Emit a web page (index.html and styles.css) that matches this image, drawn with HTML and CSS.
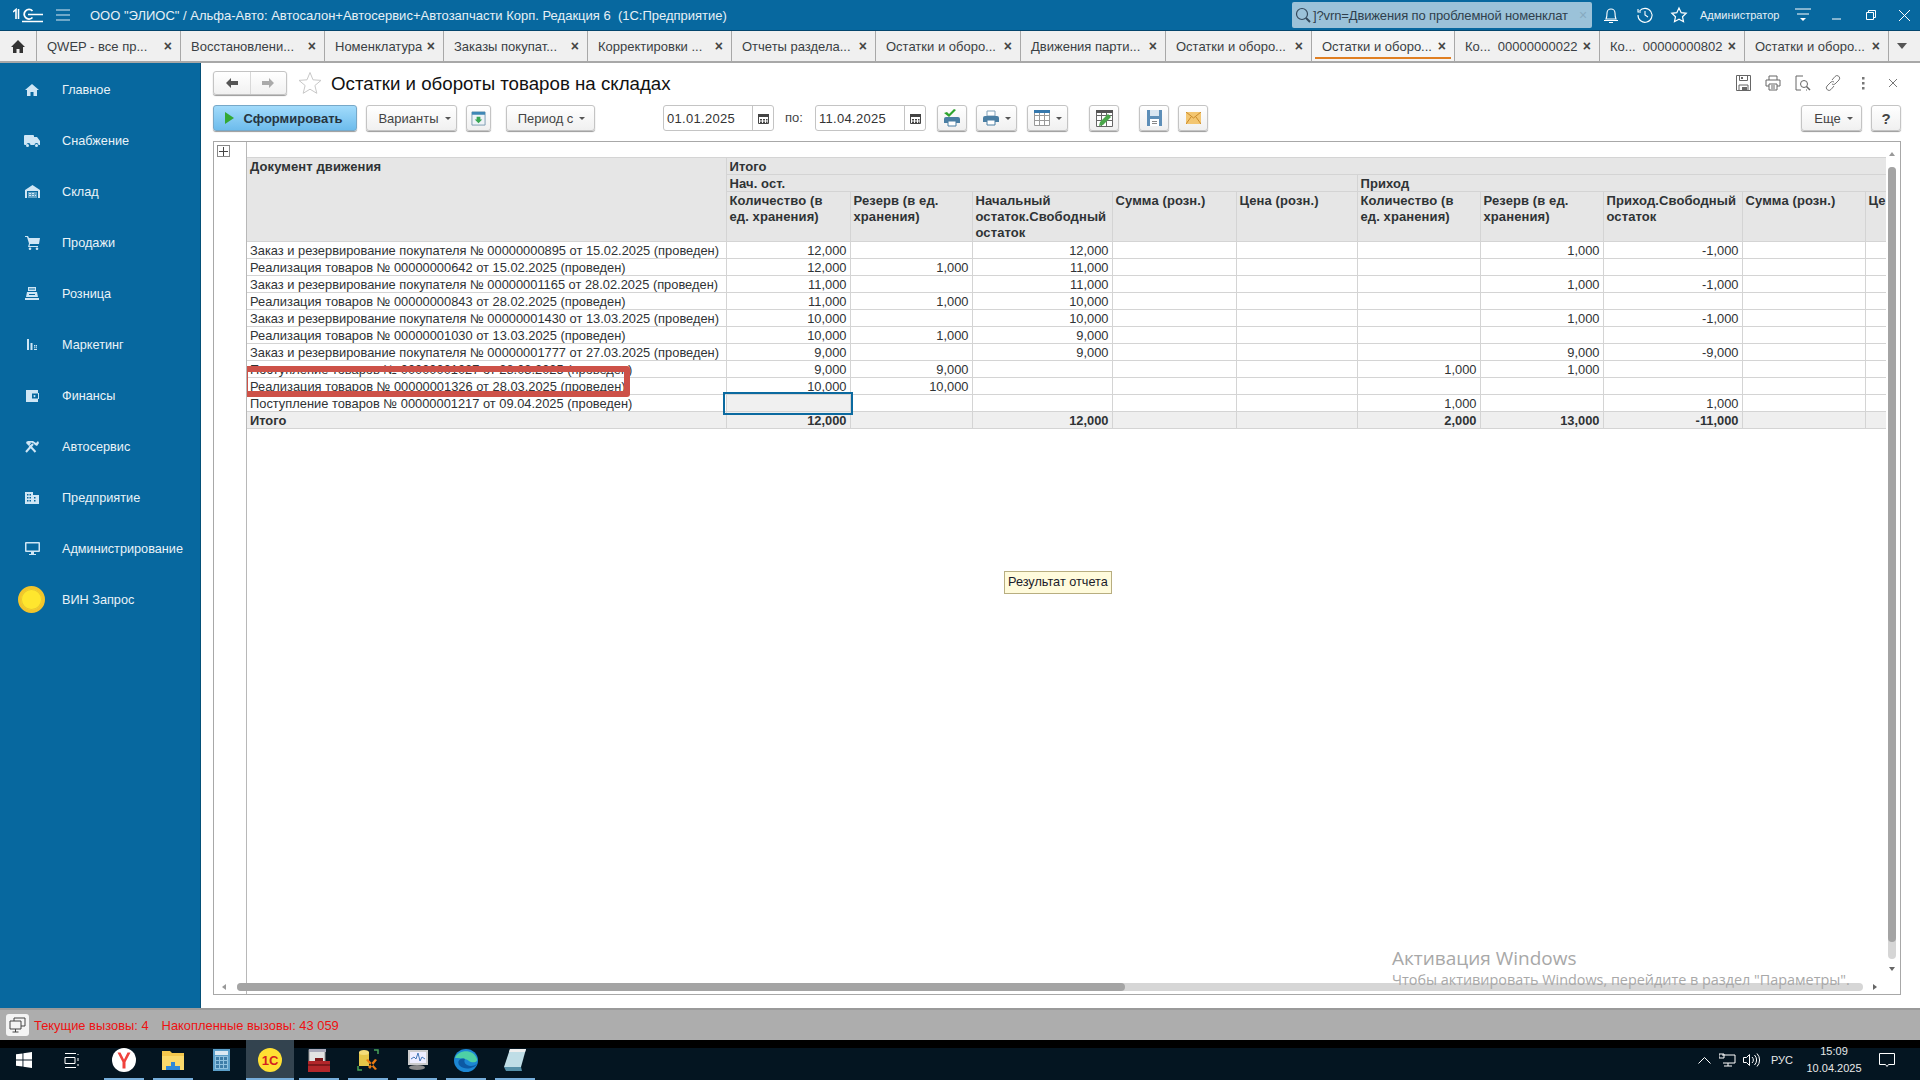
FILE: index.html
```html
<!DOCTYPE html>
<html lang="ru">
<head>
<meta charset="utf-8">
<title>Остатки и обороты товаров на складах</title>
<link rel="stylesheet" href="styles.css">
</head>
<body>
<div class="app">
  <header class="titlebar">
    <svg class="logo" width="30" height="15" viewBox="0 0 30 15"><path d="M0 4l3-2.500v9.500M5.500 1v10" fill="none" stroke="#fff" stroke-width="1.600"/><path d="M19.500 3a4.800 4.800 0 1 0 0 6.500" fill="none" stroke="#fff" stroke-width="1.800"/><path d="M15 6.500h15M9 13.500h21" stroke="#fff" stroke-width="1.600"/></svg>
    <svg class="burger" width="14" height="12" viewBox="0 0 14 12"><path d="M0 1h14M0 6h14M0 11h14" stroke="#d8e8f2" stroke-width="1"/></svg>
    <div class="apptitle">ООО "ЭЛИОС" / Альфа-Авто: Автосалон+Автосервис+Автозапчасти Корп. Редакция 6  (1С:Предприятие)</div>
    <div class="search">
      <svg width="16" height="16" viewBox="0 0 16 16"><circle cx="7" cy="7" r="5.500" fill="none" stroke="#34495c" stroke-width="1.200"/><path d="M11 11l4 4" stroke="#34495c" stroke-width="2"/></svg>
      <span class="searchtext">]?vrn=Движения по проблемной номенклат</span>
      <span class="searchx">×</span>
    </div>
    <div class="topicons">
      <svg width="18" height="18" viewBox="0 0 18 18"><path d="M4 13c1-2 1-3 1-6a4 4 0 0 1 8 0c0 3 0 4 1 6zM2 14.500h14M7 16.500h4" fill="none" stroke="#fff" stroke-width="1.100"/></svg>
      <svg class="ti2" width="18" height="18" viewBox="0 0 18 18"><path d="M3.500 5A7 7 0 1 1 2 9M2 3v3h3M9 5v4l3 2" fill="none" stroke="#fff" stroke-width="1.100"/></svg>
      <svg class="ti3" width="18" height="18" viewBox="0 0 18 18"><path d="M9 2l2.200 4.700 5 .6-3.700 3.400 1 5L9 13.200l-4.500 2.500 1-5L1.800 7.300l5-.6z" fill="none" stroke="#fff" stroke-width="1.200"/></svg>
      <span class="username">Администратор</span>
      <svg class="ti4" width="16" height="14" viewBox="0 0 16 14"><path d="M0 1h16M2 6h12" stroke="#fff"/><path d="M5 10h6l-3 3z" fill="#fff"/></svg>
      <svg class="ti5" width="10" height="10" viewBox="0 0 10 10"><path d="M0 9h9" stroke="#fff"/></svg>
      <svg class="ti6" width="10" height="10" viewBox="0 0 10 10"><path d="M.5 2.500h7v7h-7zM2.500 2.500v-2h7v7h-2" fill="none" stroke="#fff"/></svg>
      <svg class="ti7" width="11" height="11" viewBox="0 0 11 11"><path d="M0 0l11 11M11 0L0 11" stroke="#fff"/></svg>
    </div>
  </header>

  <nav class="tabs">
    <div class="tab tab-home"><svg width="14" height="13" viewBox="0 0 14 13"><path d="M7 0L0 7h2v6h3.500V9h3v4H12V7h2z" fill="#333"/></svg></div>
    <div class="tab w144"><span class="tabtext">QWEP - все пр...</span><b class="x">×</b></div>
    <div class="tab w144"><span class="tabtext">Восстановлени...</span><b class="x">×</b></div>
    <div class="tab w119"><span class="tabtext">Номенклатура</span><b class="x">×</b></div>
    <div class="tab w144"><span class="tabtext">Заказы покупат...</span><b class="x">×</b></div>
    <div class="tab w144"><span class="tabtext">Корректировки ...</span><b class="x">×</b></div>
    <div class="tab w144"><span class="tabtext">Отчеты раздела...</span><b class="x">×</b></div>
    <div class="tab w145"><span class="tabtext">Остатки и оборо...</span><b class="x">×</b></div>
    <div class="tab w145"><span class="tabtext">Движения парти...</span><b class="x">×</b></div>
    <div class="tab w146"><span class="tabtext">Остатки и оборо...</span><b class="x">×</b></div>
    <div class="tab w143 active"><span class="tabtext">Остатки и оборо...</span><b class="x">×</b></div>
    <div class="tab w145"><span class="tabtext">Ко...  00000000022</span><b class="x">×</b></div>
    <div class="tab w145"><span class="tabtext">Ко...  00000000802</span><b class="x">×</b></div>
    <div class="tab w144"><span class="tabtext">Остатки и оборо...</span><b class="x">×</b></div>
    <div class="tab-more"><i class="caret big"></i></div>
  </nav>

  <div class="main">
    <aside class="sidebar">
      <a class="navitem"><span class="navicon"><svg width="14" height="12" viewBox="0 0 14 12"><path d="M7 0L0 6h2v6h3.500V8h3v4H12V6h2z"/></svg></span>Главное</a>
      <a class="navitem"><span class="navicon"><svg width="16" height="12" viewBox="0 0 16 12"><path d="M0 1q0-1 1-1h8q1 0 1 1v1h3l3 4v4h-1.500a2 2 0 0 0-4 0h-4a2 2 0 0 0-4 0H1q-1 0-1-1z"/><circle cx="3.500" cy="10.500" r="1.500"/><circle cx="12.500" cy="10.500" r="1.500"/></svg></span>Снабжение</a>
      <a class="navitem"><span class="navicon"><svg width="15" height="13" viewBox="0 0 15 13"><path d="M0 13V5l7.500-5L15 5v8h-2V6H2v7z"/><path d="M3 7h9v6H3z" opacity=".45"/><path d="M4 8h2v1H4zM7 8h2v1H7zM4 10h2v1H4zM7 10h2v1H7zM10 10h1v1h-1z"/></svg></span>Склад</a>
      <a class="navitem"><span class="navicon"><svg width="15" height="14" viewBox="0 0 15 14"><path d="M0 0h3l1 2h11l-1 6H5l-.500 2H13v1H3l1-3.500L2 1H0z"/><circle cx="5" cy="12.700" r="1.300"/><circle cx="12" cy="12.700" r="1.300"/></svg></span>Продажи</a>
      <a class="navitem"><span class="navicon"><svg width="14" height="13" viewBox="0 0 14 13"><path d="M3 0h8v4H3zM2 5h10l1 5H1zM0 11h14v2H0z"/><path d="M4 1.500h6v1H4zM4 7h6v1H4z" fill="#07689f"/></svg></span>Розница</a>
      <a class="navitem"><span class="navicon"><svg width="10" height="11" viewBox="0 0 10 11"><path d="M0 0h2v11H0zM3.500 4h2v7h-2zM7 6h1.200v1.500H7zM8.800 6H10v1.500H8.800zM7 8.300h1.200v1H7zM8.800 8.300H10v1H8.800zM7 10h3v1H7z"/></svg></span>Маркетинг</a>
      <a class="navitem"><span class="navicon"><svg width="13" height="12" viewBox="0 0 13 12"><path fill-rule="evenodd" d="M0 0h12v3h1v6h-1v3H0zM6 3.500h6v5H6zM8.500 5a1 1 0 1 0 .01 0z"/></svg></span>Финансы</a>
      <a class="navitem"><span class="navicon"><svg width="14" height="13" viewBox="0 0 14 13"><path d="M1 12L8 4M10.500 12L4.500 5.500" fill="none" stroke="#cfe6f5" stroke-width="2"/><path d="M3 1h5l3 2 2-2 1 2-2 3-2-1-2-2-5-1zM1 3l1-2 4 2-2 3z"/></svg></span>Автосервис</a>
      <a class="navitem"><span class="navicon"><svg width="14" height="12" viewBox="0 0 14 12"><path fill-rule="evenodd" d="M0 0h8v3h6v9H0zM2 2v1.500h1.500V2zM4.500 2v1.500H6V2zM2 5v1.500h1.500V5zM4.500 5v1.500H6V5zM2 8v1.500h1.500V8zM4.500 8v1.500H6V8zM9 5v1.500h1.500V5zM9 8v1.500h1.500V8z"/></svg></span>Предприятие</a>
      <a class="navitem"><span class="navicon"><svg width="15" height="13" viewBox="0 0 15 13"><path fill-rule="evenodd" d="M1 0h13q1 0 1 1v8q0 1-1 1H9v2h2v1H4v-1h2v-2H1q-1 0-1-1V1q0-1 1-1zM1.500 1.500v7h12v-7z"/></svg></span>Администрирование</a>
      <a class="navitem"><span class="navicon"><span class="coin"></span></span>ВИН Запрос</a>
    </aside>

    <section class="content">
      <div class="formhead">
        <div class="navbtns">
          <span class="navbtn"><svg width="12" height="10" viewBox="0 0 12 10"><path d="M5 0v3h7v4H5v3L0 5z" fill="#555"/></svg></span>
          <span class="navbtn off"><svg width="12" height="10" viewBox="0 0 12 10"><path d="M7 0v3H0v4h7v3l5-5z" fill="#aaa"/></svg></span>
        </div>
        <svg class="favstar" width="24" height="24" viewBox="0 0 24 24"><path d="M12 1.500l3 7.300 8 .6-6.100 5.100 1.900 7.800L12 18.200l-6.800 4.100 1.900-7.800L1 9.400l8-.6z" fill="#fff" stroke="#c8c8c8"/></svg>
        <h1 class="formtitle">Остатки и обороты товаров на складах</h1>
        <div class="formtools">
          <svg width="15" height="16" viewBox="0 0 15 16"><path d="M.5.500h14v15H.5zM3.500.500v5h8v-5M3 10h9v5.500H3z" fill="none" stroke="#666"/><path d="M5 2h2v2H5zM6 12h5v3H6z" fill="#666"/></svg>
          <svg width="16" height="16" viewBox="0 0 16 16"><path d="M4 5V1h8v4M4 11H1V5h14v6h-3M4 9h8v6H4zM6 11h4M6 13h4" fill="none" stroke="#666"/></svg>
          <svg width="16" height="16" viewBox="0 0 16 16"><path d="M6 15H1V1h7M11 15h1" fill="none" stroke="#666"/><circle cx="9" cy="9" r="3.500" fill="none" stroke="#666"/><path d="M11.500 11.500L15 15" stroke="#666" stroke-width="1.500"/></svg>
          <svg width="16" height="16" viewBox="0 0 16 16"><path d="M7 5l3-3.500a2.500 2.500 0 0 1 4 3.500l-4 4a2.500 2.500 0 0 1-3 0M9 11l-3 3.500a2.500 2.500 0 0 1-4-3.500l4-4a2.500 2.500 0 0 1 3 0" fill="none" stroke="#777"/></svg>
          <svg width="16" height="16" viewBox="0 0 16 16"><path d="M7 2h2.500v2.500H7zM7 7h2.500v2.500H7zM7 12h2.500v2.500H7z" fill="#777"/></svg>
          <svg width="16" height="16" viewBox="0 0 16 16"><path d="M4 4l8 8M12 4l-8 8" stroke="#777"/></svg>
        </div>
      </div>

      <div class="cmdbar">
        <button class="btn primary w144b"><i class="play"></i>Сформировать</button>
        <button class="btn w90">Варианты<i class="caret"></i></button>
        <button class="btn ic w24"><svg width="15" height="15" viewBox="0 0 16 16"><path d="M1 1h14v14H1z" fill="#eef3f7" stroke="#7a9ab0"/><path d="M1 1h14v3H1z" fill="#3f87b5"/><path d="M6 6h4v3h2l-4 4-4-4h2z" fill="#3aa655"/></svg></button>
        <button class="btn w89">Период с<i class="caret"></i></button>
        <div class="datefield d1"><span class="dateval">01.01.2025</span><span class="datecal"><svg width="11" height="11" viewBox="0 0 11 11"><path d="M.5 1.500h10v9H.5z" fill="#fff" stroke="#444"/><path d="M0 1h11v3H0zM2 6h2v1.500H2zM5 6h2v1.500H5zM8 6h1.500v1.500H8zM2 8.500h2V10H2zM5 8.500h2V10H5zM8 8.500h1.500V10H8z" fill="#444"/></svg></span></div>
        <span class="datelabel">по:</span>
        <div class="datefield d2"><span class="dateval">11.04.2025</span><span class="datecal"><svg width="11" height="11" viewBox="0 0 11 11"><path d="M.5 1.500h10v9H.5z" fill="#fff" stroke="#444"/><path d="M0 1h11v3H0zM2 6h2v1.500H2zM5 6h2v1.500H5zM8 6h1.500v1.500H8zM2 8.500h2V10H2zM5 8.500h2V10H5zM8 8.500h1.500V10H8z" fill="#444"/></svg></span></div>
        <button class="btn ic w30 g1"><svg width="18" height="18" viewBox="0 0 18 18"><path d="M3 8h12q2 0 2 2v4H1v-4q0-2 2-2z" fill="#4a7ea3"/><path d="M5 12h8v5H5z" fill="#fff" stroke="#4a7ea3"/><path d="M1 4l3-1 2 2 5-5 2 1-7 7z" fill="#2fa52f"/></svg></button>
        <button class="btn ic w41 g2"><svg width="16" height="16" viewBox="0 0 16 16"><path d="M4 1h8v5H4z" fill="#fff" stroke="#7f9fb7"/><path d="M2 6h12q2 0 2 2v4H0V8q0-2 2-2z" fill="#4a7ea3"/><path d="M4 10h8v5H4z" fill="#fff" stroke="#4a7ea3"/></svg><i class="caret"></i></button>
        <button class="btn ic w41 g3"><svg width="16" height="16" viewBox="0 0 16 16"><path d="M.5.500h15v15H.5zM.5 5.500h15M.5 10.500h15M5.500 3v12.500M10.500 3v12.500" fill="#fff" stroke="#999"/><path d="M0 0h16v3H0z" fill="#3678ad"/></svg><i class="caret"></i></button>
        <button class="btn ic w30 g4"><svg width="17" height="17" viewBox="0 0 17 17"><path d="M.5.500h16v16H.5zM.5 5.500h16M.5 10.500h16M5.500.5v16M10.500.5v16" fill="#fff" stroke="#666"/><path d="M0 0h17v3H0z" fill="#555"/><path d="M3 16l1-4 8-8 3 3-8 8z" fill="#4aa64a"/></svg></button>
        <button class="btn ic w30 g5"><svg width="15" height="16" viewBox="0 0 15 16"><path d="M0 0h15v16H0z" fill="#5e8fb8"/><path d="M3 0h9v6H3z" fill="#d9e6f1"/><path d="M3 9h9v7H3z" fill="#fff"/><path d="M5 11h5v1H5zM5 13h5v1H5z" fill="#888"/></svg></button>
        <button class="btn ic w30 g6"><svg width="15" height="12" viewBox="0 0 15 12"><path d="M0 0h15v12H0z" fill="#f3c671"/><path d="M0 0l7.500 6L15 0M0 12l5-7M15 12l-5-7" fill="none" stroke="#c98a2b"/></svg></button>
        <button class="btn w61 more">Еще<i class="caret"></i></button>
        <button class="btn ic w30 help">?</button>
      </div>

      <div class="frame">
        <div class="gutter"><span class="plus"><svg width="9" height="9" viewBox="0 0 9 9"><path d="M4.500 0v9M0 4.500h9" stroke="#444"/></svg></span></div>
        <div class="report">
          <table class="grid">
            <colgroup>
              <col class="c0"><col class="c1"><col class="c2"><col class="c3"><col class="c4"><col class="c5"><col class="c6"><col class="c7"><col class="c8"><col class="c9"><col class="c10">
            </colgroup>
            <thead>
              <tr class="h17"><th rowspan="3">Документ движения</th><th colspan="10">Итого</th></tr>
              <tr class="h17"><th colspan="5">Нач. ост.</th><th colspan="5">Приход</th></tr>
              <tr class="h50"><th>Количество (в<br>ед. хранения)</th><th>Резерв (в ед.<br>хранения)</th><th>Начальный остаток.Свободный остаток</th><th>Сумма (розн.)</th><th>Цена (розн.)</th><th>Количество (в<br>ед. хранения)</th><th>Резерв (в ед.<br>хранения)</th><th>Приход.Свободный остаток</th><th>Сумма (розн.)</th><th class="clip">Це</th></tr>
            </thead>
            <tbody>
              <tr><td>Заказ и резервирование покупателя № 00000000895 от 15.02.2025 (проведен)</td><td class="n">12,000</td><td></td><td class="n">12,000</td><td></td><td></td><td></td><td class="n">1,000</td><td class="n">-1,000</td><td></td><td></td></tr>
              <tr><td>Реализация товаров № 00000000642 от 15.02.2025 (проведен)</td><td class="n">12,000</td><td class="n">1,000</td><td class="n">11,000</td><td></td><td></td><td></td><td></td><td></td><td></td><td></td></tr>
              <tr><td>Заказ и резервирование покупателя № 00000001165 от 28.02.2025 (проведен)</td><td class="n">11,000</td><td></td><td class="n">11,000</td><td></td><td></td><td></td><td class="n">1,000</td><td class="n">-1,000</td><td></td><td></td></tr>
              <tr><td>Реализация товаров № 00000000843 от 28.02.2025 (проведен)</td><td class="n">11,000</td><td class="n">1,000</td><td class="n">10,000</td><td></td><td></td><td></td><td></td><td></td><td></td><td></td></tr>
              <tr><td>Заказ и резервирование покупателя № 00000001430 от 13.03.2025 (проведен)</td><td class="n">10,000</td><td></td><td class="n">10,000</td><td></td><td></td><td></td><td class="n">1,000</td><td class="n">-1,000</td><td></td><td></td></tr>
              <tr><td>Реализация товаров № 00000001030 от 13.03.2025 (проведен)</td><td class="n">10,000</td><td class="n">1,000</td><td class="n">9,000</td><td></td><td></td><td></td><td></td><td></td><td></td><td></td></tr>
              <tr><td>Заказ и резервирование покупателя № 00000001777 от 27.03.2025 (проведен)</td><td class="n">9,000</td><td></td><td class="n">9,000</td><td></td><td></td><td></td><td class="n">9,000</td><td class="n">-9,000</td><td></td><td></td></tr>
              <tr><td>Поступление товаров № 00000001027 от 28.03.2025 (проведен)</td><td class="n">9,000</td><td class="n">9,000</td><td></td><td></td><td></td><td class="n">1,000</td><td class="n">1,000</td><td></td><td></td><td></td></tr>
              <tr><td>Реализация товаров № 00000001326 от 28.03.2025 (проведен)</td><td class="n">10,000</td><td class="n">10,000</td><td></td><td></td><td></td><td></td><td></td><td></td><td></td><td></td></tr>
              <tr><td>Поступление товаров № 00000001217 от 09.04.2025 (проведен)</td><td class="sel"></td><td></td><td></td><td></td><td></td><td class="n">1,000</td><td></td><td class="n">1,000</td><td></td><td></td></tr>
            </tbody>
            <tfoot>
              <tr><td>Итого</td><td class="n">12,000</td><td></td><td class="n">12,000</td><td></td><td></td><td class="n">2,000</td><td class="n">13,000</td><td class="n">-11,000</td><td></td><td></td></tr>
            </tfoot>
          </table>
          <div class="selbox"></div>
          <div class="redmark"></div>
        </div>
        <div class="vscroll"><i class="arrow up"></i><span class="vtrack"><span class="vthumb"></span></span><i class="arrow down"></i></div>
        <div class="hscroll"><i class="arrow left"></i><span class="htrack"><span class="hthumb"></span></span><i class="arrow right"></i></div>
        <div class="tooltip">Результат отчета</div>
        <div class="watermark"><div class="wm1">Активация Windows</div><div class="wm2">Чтобы активировать Windows, перейдите в раздел "Параметры".</div></div>
      </div>
    </section>
  </div>

  <footer class="statusbar">
    <span class="statusbtn"><svg width="17" height="16" viewBox="0 0 17 16"><path d="M5 4V1h11v8h-4M1 4h11v8H1zM6.500 12v3M3.500 15h6" fill="none" stroke="#444"/></svg></span>
    <span class="calls">Текущие вызовы: 4</span>
    <span class="calls">Накопленные вызовы: 43 059</span>
  </footer>

  <div class="taskbar">
    <span class="tb-app w48"><svg width="16" height="16" viewBox="0 0 16 16"><path d="M0 2.300L6.500 1.400v6.200H0zM7.400 1.300L16 0v7.600H7.400zM0 8.400h6.500v6.200L0 13.700zM7.400 8.400H16V16l-8.600-1.200z" fill="#fff"/></svg></span>
    <span class="tb-app w48"><svg width="16" height="15" viewBox="0 0 16 15"><path d="M1 .5h11M1 14.500h11M1 4.500h10v6H1zM14 1v1M14 5v3M14 11v2" fill="none" stroke="#fff"/></svg></span>
    <span class="tb-app w49 run first"><svg width="24" height="24" viewBox="0 0 24 24"><circle cx="12" cy="12" r="12" fill="#fff"/><path d="M5.500 4.500l5 9.500v6.500h3V14l5-9.500h-3l-3.500 7-3.500-7z" fill="#f0423c"/></svg></span>
    <span class="tb-app w49 run"><svg width="22" height="19" viewBox="0 0 22 19"><path d="M0 0h8l2 2h12v17H0z" fill="#f4c74d"/><path d="M0 5h22v14H0z" fill="#fbd96b"/><path d="M4 15h5v-4h4v4h5v4H4z" fill="#2f88d8"/></svg></span>
    <span class="tb-app w49"><svg width="17" height="22" viewBox="0 0 17 22"><path d="M0 0h17v22H0z" fill="#5b9fc9"/><path d="M2 2h13v4H2z" fill="#dbe9f3"/><path d="M2 7h13v13H2z" fill="#8fc1df"/><path d="M3 8h3v3H3zM7 8h3v3H7zM11 8h3v3h-3zM3 12h3v3H3zM7 12h3v3H7zM11 12h3v3h-3zM3 16h3v3H3zM7 16h3v3H7zM11 16h3v3h-3z" fill="#3d7da8"/></svg></span>
    <span class="tb-app w48 current"><span class="onec">1С</span></span>
    <span class="tb-app w49 run"><svg width="22" height="23" viewBox="0 0 22 23"><path d="M1 .5h16v13H1z" fill="#e3e3e3" stroke="#999"/><path d="M1 0h17v3H1z" fill="#aab"/><path d="M0 12h22v11H0z" fill="#b2262a"/><path d="M7 9h8v3H7zM0 15h22v2H0z" fill="#7d181b"/></svg></span>
    <span class="tb-app w49 run"><svg width="22" height="22" viewBox="0 0 22 22"><path d="M2 3h10v14H2z" fill="#e6c649"/><ellipse cx="7" cy="3.500" rx="5" ry="2.500" fill="#f4dc79"/><path d="M11 18l7-8 2 1-7 9zM9 11l9 10 2-1-9-10z" fill="#ea7b12"/><path d="M17 1h4v4M1 17v4h4" fill="none" stroke="#48a25a" stroke-width="1.500"/></svg></span>
    <span class="tb-app w49 run"><svg width="23" height="20" viewBox="0 0 23 20"><path d="M3 0h20v15H3z" fill="#ccc"/><path d="M5 2h16v11H5z" fill="#eef"/><path d="M6 9l3-2 2 2 2-6 2 8 2-4 3 2" fill="none" stroke="#4478b8"/><ellipse cx="12" cy="17.500" rx="8" ry="2.500" fill="#8a8a8a"/></svg></span>
    <span class="tb-app w49 run"><svg width="24" height="23" viewBox="0 0 24 23"><ellipse cx="12" cy="11.500" rx="12" ry="11.500" fill="#1c87d4"/><path d="M1 9c3-8 18-10 22 1 1 4-6 4-8 2-3-3-11-3-14-3z" fill="#4ed0a5"/><path d="M6 17c-4-4 0-9 5-7-2 3 1 7 6 7 2 0 4-1 6-2-3 5-13 6-17 2z" fill="#0c59a4"/></svg></span>
    <span class="tb-app w49 run"><svg width="22" height="22" viewBox="0 0 22 22"><path d="M6 0h16l-5 18H0z" fill="#bfdde6"/><path d="M6 0h16l-1 3H5z" fill="#eee"/><path d="M0 18h17l1 4H2z" fill="#558fa7"/></svg></span>
    <span class="tray">
      <svg width="13" height="8" viewBox="0 0 13 8"><path d="M.5 7.500l6-6 6 6" fill="none" stroke="#fff"/></svg>
      <svg class="tr2" width="17" height="14" viewBox="0 0 17 14"><path d="M3 2h13v8H4M9 10v3M5 13h8M0 1h5v4H0z" fill="none" stroke="#fff"/></svg>
      <svg class="tr3" width="17" height="14" viewBox="0 0 17 14"><path d="M.5 4.500h3l3-3v11l-3-3h-3zM9 4a4 4 0 0 1 0 6M11.500 2a7 7 0 0 1 0 10M14 .5a9.500 9.500 0 0 1 0 13" fill="none" stroke="#fff"/></svg>
      <span class="lang">РУС</span>
      <span class="clock"><span>15:09</span><span>10.04.2025</span></span>
      <svg class="tr4" width="16" height="15" viewBox="0 0 16 15"><path d="M.5.500h15v11H9.500l-1.500 2-1.500-2h-6z" fill="none" stroke="#fff"/></svg>
    </span>
  </div>
</div>
</body>
</html>
```

FILE: styles.css
```css
* { box-sizing: border-box; }
html, body { margin: 0; height: 100%; }
body { font-family: "Liberation Sans", Arial, sans-serif; font-size: 13px; color: #333; overflow: hidden; }
.app { width: 1920px; height: 1080px; display: flex; flex-direction: column; overflow: hidden; }

.titlebar { height: 31px; flex: none; background: #07689f; border-bottom: 1px solid #04466d; display: flex; align-items: center; color: #fff; }
.logo { margin-left: 13px; flex: none; }
.burger { margin-left: 13px; flex: none; }
.apptitle { margin-left: 20px; width: 1202px; font-size: 13px; color: #e6f0f6; white-space: pre; flex: none; }
.search { width: 300px; height: 26px; background: #9bc2d9; border-radius: 2px; display: flex; align-items: center; padding-left: 3px; color: #2f3f4c; font-size: 13px; flex: none; }
.searchtext { margin-left: 2px; white-space: nowrap; letter-spacing: -.13px; }
.searchx { margin-left: 11px; color: #87aac0; font-size: 14px; }
.topicons { display: flex; align-items: center; margin-left: 10px; }
.ti2 { margin-left: 16px; }
.ti3 { margin-left: 16px; }
.username { margin-left: 12px; font-size: 11px; color: #e6f0f6; width: 89px; white-space: nowrap; }
.ti4 { margin-left: 6px; }
.ti5 { margin-left: 21px; }
.ti6 { margin-left: 24px; }
.ti7 { margin-left: 23px; }

.tabs { height: 32px; flex: none; background: #f0f0f0; border-bottom: 2px solid #a8a8a8; display: flex; }
.tab { height: 30px; flex: none; display: flex; align-items: center; justify-content: space-between; padding: 0 8px 0 10px; border-right: 1px solid #a8a8a8; color: #3a3f44; font-size: 13px; position: relative; }
.tab-home { width: 37px; justify-content: center; padding: 0; }
.w144 { width: 144px; }
.w119 { width: 119px; }
.w145 { width: 145px; }
.w146 { width: 146px; }
.w143 { width: 143px; }
.tabtext { white-space: pre; }
.x { font-size: 14px; font-weight: bold; color: #444; line-height: 1; }
.active { background: #f5f5f5; }
.active::after { content: ""; position: absolute; left: 3px; right: 3px; bottom: 2px; height: 2px; background: #e07f22; }
.tab-more { flex: 1; display: flex; align-items: center; justify-content: center; padding-right: 6px; }

.caret { display: inline-block; width: 0; height: 0; border-left: 3px solid transparent; border-right: 3px solid transparent; border-top: 3px solid #555; margin-left: 6px; }
.caret.big { border-left-width: 5px; border-right-width: 5px; border-top-width: 6px; margin-left: 0; }

.main { flex: 1; display: flex; min-height: 0; }
.sidebar { width: 201px; flex: none; background: #07689f; border-right: 1px solid #055078; padding-top: 1px; }
.navitem { height: 51px; display: flex; align-items: center; color: #eaf3f8; font-size: 12.700px; }
.navicon { width: 62px; padding-left: 2px; display: flex; justify-content: center; flex: none; }
.navicon svg { fill: #cfe6f5; }
.coin { width: 27px; height: 27px; border-radius: 50%; background: #ffe62e; border: 3px solid #f2c52b; box-shadow: inset 0 0 0 1px #e8c830; margin-left: -2px; }

.content { flex: 1; min-width: 0; padding: 8px 19px 13px 12px; display: flex; flex-direction: column; background: #fff; }
.formhead { height: 24px; display: flex; align-items: center; flex: none; }
.navbtns { width: 74px; height: 24px; display: flex; border: 1px solid #c4c4c4; border-radius: 3px; box-shadow: 0 1px 1px #999; background: linear-gradient(#fff, #f1f1f1); }
.navbtn { flex: 1; display: flex; align-items: center; justify-content: center; }
.navbtn + .navbtn { border-left: 1px solid #d8d8d8; }
.favstar { margin-left: 11px; }
.formtitle { margin: 1px 0 0 9px; font-size: 18.700px; font-weight: normal; color: #111; white-space: nowrap; }
.formtools { margin-left: auto; display: flex; gap: 14px; }

.cmdbar { height: 26px; margin-top: 10px; display: flex; align-items: stretch; flex: none; }
.btn { font: inherit; font-size: 13px; color: #444; border: 1px solid #c4c4c4; border-radius: 3px; background: linear-gradient(#fff, #f0f0f0); box-shadow: 0 1px 1px #999; display: flex; align-items: center; justify-content: center; padding: 0; flex: none; }
.primary { background: linear-gradient(#a2dbfb, #6dbcec); border-color: #77a8c8; color: #26343f; font-weight: bold; }
.play { width: 0; height: 0; border-left: 9px solid #34a834; border-top: 6px solid transparent; border-bottom: 6px solid transparent; margin-right: 9px; margin-left: -2px; }
.w144b { width: 144px; }
.w90 { width: 91px; margin-left: 9px; padding-left: 6px; }
.w24 { width: 25px; margin-left: 9px; }
.w89 { width: 89px; margin-left: 15px; padding-left: 2px; }
.w30 { width: 30px; }
.w41 { width: 41px; }
.w61 { width: 61px; padding-left: 4px; }
.datefield { height: 26px; border: 1px solid #c4c4c4; border-radius: 3px; display: flex; width: 111px; flex: none; }
.d1 { margin-left: 68px; }
.d2 { margin-left: 0; }
.dateval { flex: 1; padding-left: 3px; line-height: 25px; color: #333; letter-spacing: .3px; }
.datecal { width: 21px; border-left: 1px solid #c4c4c4; display: flex; align-items: center; justify-content: center; }
.datelabel { width: 41px; padding-left: 11px; line-height: 26px; color: #444; }
.g1 { margin-left: 11px; }
.g2 { margin-left: 9px; }
.g3 { margin-left: 10px; }
.g4 { margin-left: 21px; }
.g5 { margin-left: 20px; }
.g6 { margin-left: 9px; }
.more { margin-left: auto; }
.help { margin-left: 9px; font-size: 15px; font-weight: bold; }

.frame { flex: 1; margin-top: 10px; border: 1px solid #a8a8a8; display: flex; min-height: 0; position: relative; }
.gutter { width: 33px; flex: none; padding: 3px 0 0 3px; border-right: 1px solid #b8b8b8; }
.plus { width: 13px; height: 12px; border: 1px solid #888; display: flex; align-items: center; justify-content: center; background: #fff; }
.report { width: 1639px; height: 100%; padding-top: 15px; overflow: hidden; position: relative; flex: none; }

.grid { table-layout: fixed; width: 1639px; border-collapse: collapse; font-size: 12.870px; line-height: 15px; color: #2f3335; }
.c0 { width: 479px; } .c1 { width: 124px; } .c2 { width: 122px; } .c3 { width: 140px; } .c4 { width: 124px; } .c5 { width: 121px; } .c6 { width: 123px; } .c7 { width: 123px; } .c8 { width: 139px; } .c9 { width: 123px; } .c10 { width: 21px; }
.grid th { background: #e6e6e6; border: 1px solid #d4d4d4; text-align: left; vertical-align: top; padding: 1px 3px 0; font-size: 13px; font-weight: bold; letter-spacing: .1px; overflow: hidden; }
.grid th:first-child { border-left: 0; }
.h17 { height: 17px; }
.h50 { height: 50px; }
.h50 th { line-height: 16px; }
.clip { white-space: nowrap; }
.grid td { height: 17px; padding: 0 3px; border: 1px solid #d4d4d4; white-space: nowrap; overflow: hidden; background: #fff; }
.grid td:first-child { border-left: 0; }
.n { text-align: right; }
.grid tfoot td { background: #efefef; font-weight: bold; }
.grid td.sel { background: #f0f0f0; }
.selbox { position: absolute; left: 476px; top: 250px; width: 130px; height: 23px; border: 2px solid #0b6aa0; pointer-events: none; }
.redmark { position: absolute; left: -5px; top: 224px; width: 388px; height: 31px; border: 6px solid #cd5148; border-radius: 3px; pointer-events: none; }

.vscroll { position: absolute; right: 3px; top: 10px; bottom: 23px; width: 10px; display: flex; flex-direction: column; align-items: center; }
.vtrack { flex: 1; width: 8px; margin: 11px 0 8px; background: #d6d6d6; border-radius: 4px; display: block; }
.vthumb { display: block; height: 775px; background: #a4a4a4; border-radius: 4px; }
.hscroll { position: absolute; left: 8px; right: 23px; bottom: 2px; height: 10px; display: flex; align-items: center; }
.htrack { flex: 1; height: 8px; margin: 0 10px 0 11px; background: #d6d6d6; border-radius: 4px; display: block; }
.hthumb { display: block; width: 888px; height: 8px; background: #a4a4a4; border-radius: 4px; }
.arrow { width: 0; height: 0; flex: none; border: 3px solid transparent; }
.arrow.up { border-bottom: 4px solid #999; border-top: 0; }
.arrow.down { border-top: 4px solid #666; border-bottom: 0; }
.arrow.left { border-right: 4px solid #999; border-left: 0; }
.arrow.right { border-left: 4px solid #666; border-right: 0; }

.tooltip { position: absolute; left: 790px; top: 429px; width: 108px; height: 23px; background: #fffbdc; border: 1px solid #b8ae80; font-size: 12.700px; line-height: 21px; padding-left: 3px; color: #1a1a2a; white-space: nowrap; }
.watermark { position: absolute; left: 1178px; top: 804px; color: #a8a8a8; font-family: "Open Sans", sans-serif; white-space: nowrap; pointer-events: none; }
.wm1 { font-size: 19px; line-height: 24px; }
.wm2 { font-size: 14.400px; line-height: 20px; }

.statusbar { height: 32px; flex: none; background: #adadad; border-top: 2px solid #9a9a9a; display: flex; align-items: center; padding-left: 6px; color: #ee1111; font-size: 12.900px; }
.statusbtn { width: 23px; height: 22px; background: #f4f4f4; border-radius: 3px; display: flex; align-items: center; justify-content: center; margin-right: 5px; }
.calls { margin-right: 13px; }

.taskbar { height: 40px; flex: none; background: linear-gradient(#000 0, #000 8px, #041521 8px); display: flex; align-items: stretch; color: #fff; }
.tb-app { display: flex; align-items: center; justify-content: center; flex: none; }
.first { margin-left: 3px; }
.w48 { width: 48px; }
.w49 { width: 49px; }
.run { background: linear-gradient(#77aedb, #77aedb) bottom center / 40px 2px no-repeat; }
.current { background: #33434f linear-gradient(#77aedb, #77aedb) bottom center / 48px 2px no-repeat; }
.onec { width: 24px; height: 24px; border-radius: 50%; background: #ffe033; color: #d32020; font-weight: bold; font-size: 13px; display: flex; align-items: center; justify-content: center; }
.tray { margin-left: auto; display: flex; align-items: center; font-size: 11px; color: #e8e8e8; padding-right: 25px; }
.tr2 { margin-left: 8px; }
.tr3 { margin-left: 7px; }
.lang { margin-left: 11px; }
.clock { margin-left: 9px; width: 64px; display: flex; flex-direction: column; align-items: center; line-height: 17px; font-size: 11px; }
.tr4 { margin-left: 13px; }
```
